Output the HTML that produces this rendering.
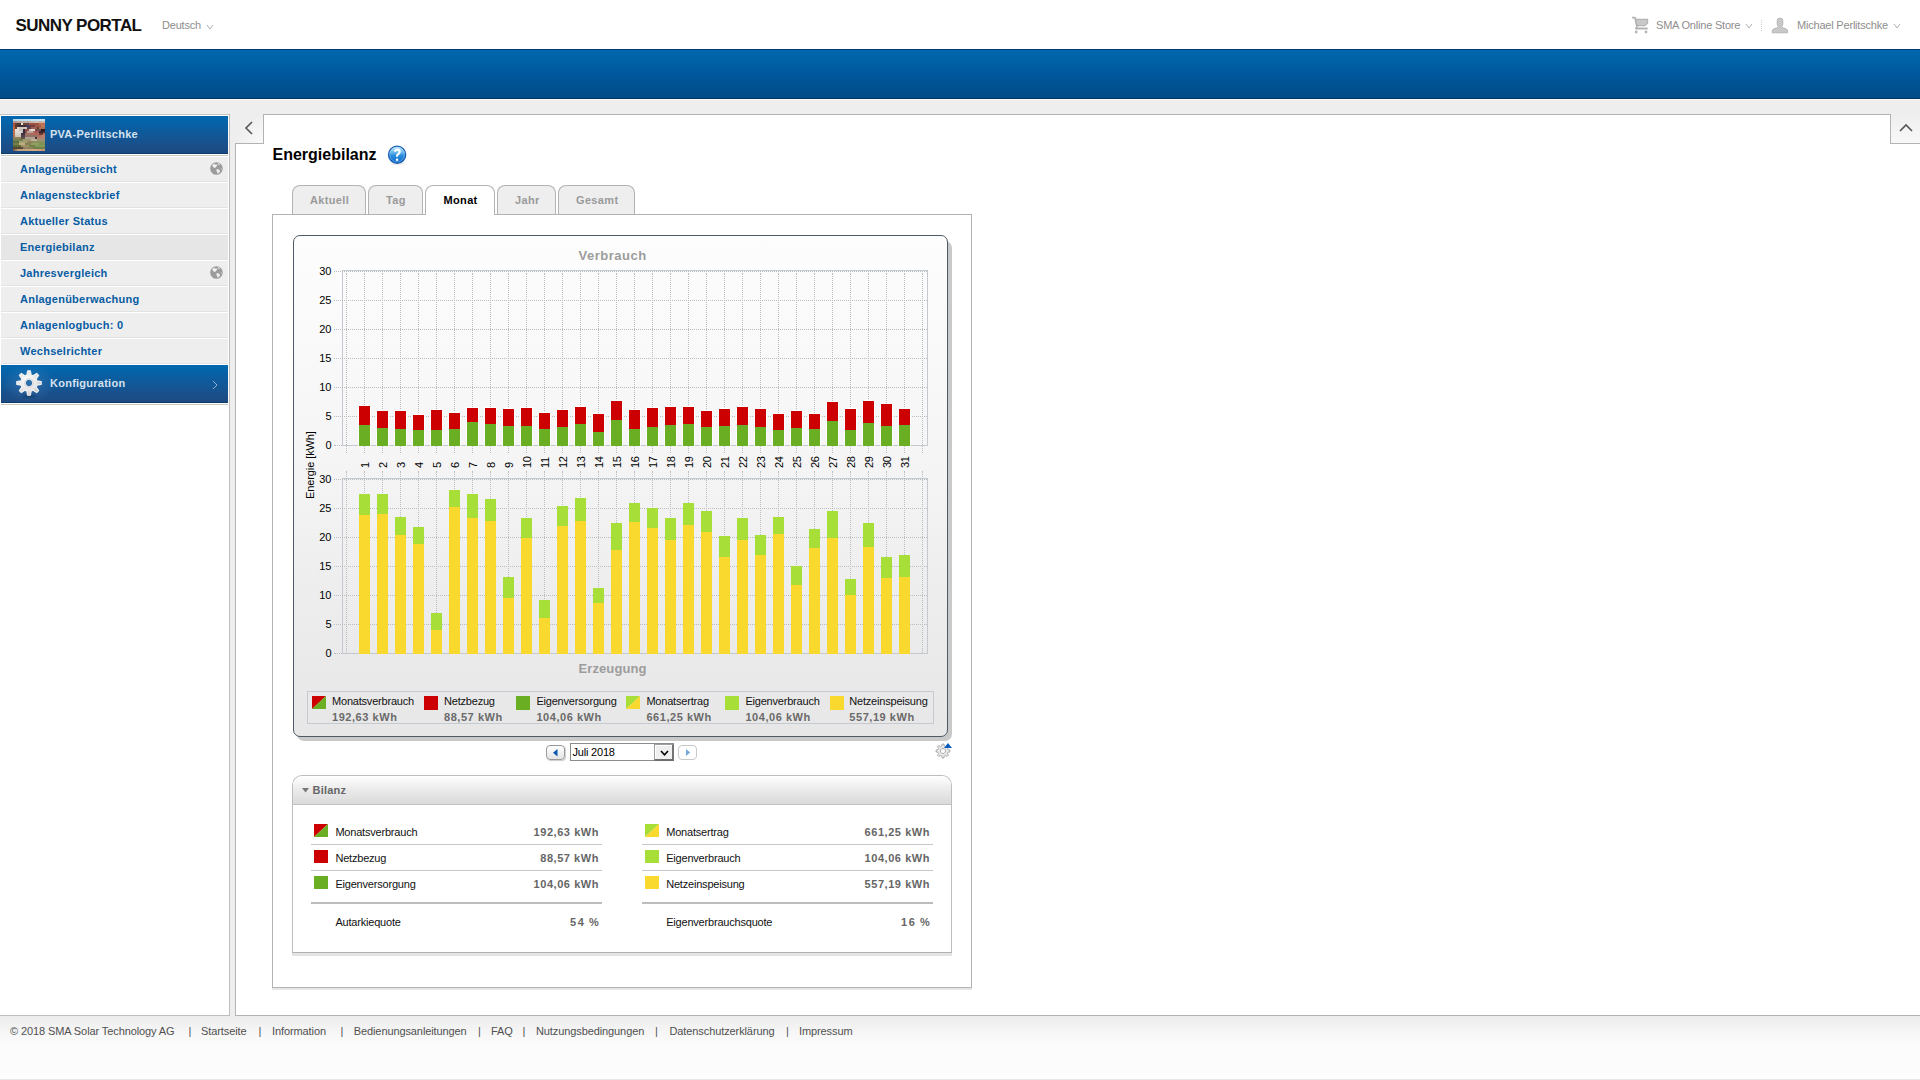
<!DOCTYPE html>
<html><head><meta charset="utf-8"><title>Sunny Portal - Energiebilanz</title>
<style>
html,body{margin:0;padding:0;width:1920px;height:1080px;overflow:hidden;background:#fff;}
body{position:relative;font-family:"Liberation Sans",sans-serif;}
.b{position:absolute;box-sizing:content-box;}
.t{position:absolute;white-space:nowrap;font-family:"Liberation Sans",sans-serif;}
</style></head><body>
<div class="t" style="left:15.5px;top:16.61px;font-size:17px;line-height:17px;font-weight:bold;color:#111;letter-spacing:-0.55px;">SUNNY PORTAL</div>
<div class="t" style="left:162px;top:19.69px;font-size:11px;line-height:11px;font-weight:normal;color:#8e8e8e;letter-spacing:-0.2px;">Deutsch</div>
<svg class="b" style="left:205.5px;top:23.5px" width="8" height="6"><polyline points="1,1 4.0,5 7,1" fill="none" stroke="#b0b0b0" stroke-width="1"/></svg>
<svg class="b" style="left:1628px;top:12px" width="24" height="26" viewBox="0 0 24 26">
<path d="M4 5.6 L7 5.6 L9 14.5 L8 17" fill="none" stroke="#b4b4b4" stroke-width="1.9" stroke-linejoin="round"/>
<path d="M7.6 7.3 L19.6 7.3 L19.6 11 L17 13.6 L9.2 13.6 Z" fill="#c8c8c8" stroke="#b4b4b4" stroke-width="1.2" stroke-linejoin="round"/>
<rect x="7.2" y="15.6" width="12.6" height="2" rx="0.8" fill="#b4b4b4"/>
<circle cx="8.2" cy="20" r="1.4" fill="#b4b4b4"/><circle cx="18" cy="20" r="1.4" fill="#b4b4b4"/>
</svg>
<div class="t" style="left:1656px;top:19.69px;font-size:11px;line-height:11px;font-weight:normal;color:#8e8e8e;letter-spacing:-0.2px;">SMA Online Store</div>
<svg class="b" style="left:1744.5px;top:23px" width="8" height="6"><polyline points="1,1 4.0,5 7,1" fill="none" stroke="#b0b0b0" stroke-width="1"/></svg>
<div class="b" style="left:1761px;top:20px;width:1px;height:11px;border-left:1px dotted #ccc;width:0"></div>
<svg class="b" style="left:1766px;top:12px" width="30" height="26" viewBox="0 0 30 26">
<path d="M11.2 8.2 Q11.2 6.2 14 6.2 Q16.8 6.2 16.8 8.2 L16.8 11.8 Q16.8 13.6 15.4 14.9 Q16.8 16 19.4 16.6 Q21.6 17.3 21.6 19 L21.6 20.8 L6.2 20.8 L6.2 19 Q6.2 17.3 8.4 16.6 Q11 16 12.6 14.9 Q11.2 13.6 11.2 11.8 Z" fill="#c8c8c8" stroke="#b2b2b2" stroke-width="0.9" stroke-linejoin="round"/>
</svg>
<div class="t" style="left:1797px;top:19.69px;font-size:11px;line-height:11px;font-weight:normal;color:#8e8e8e;letter-spacing:-0.2px;">Michael Perlitschke</div>
<svg class="b" style="left:1893px;top:23px" width="8" height="6"><polyline points="1,1 4.0,5 7,1" fill="none" stroke="#b0b0b0" stroke-width="1"/></svg>
<div class="b" style="left:0px;top:49px;width:1920px;height:48px;background:linear-gradient(#0067ae,#0062a6 20%,#00569a 55%,#004c86);border-top:1px solid #003a70;border-bottom:1px solid #003566;height:48px"></div>
<div class="b" style="left:0px;top:99px;width:1920px;height:917px;background:#eeeeee"></div>
<div class="b" style="left:0px;top:99px;width:1920px;height:1px;background:#faf8f5"></div>
<div class="b" style="left:0px;top:114px;width:229px;height:901px;background:#fff;border-top:1px solid #c4c4c4;border-right:1px solid #bdbdbd;border-bottom:1px solid #bdbdbd;width:229px;height:900px"></div>
<div class="b" style="left:1px;top:116px;width:227px;height:38px;background:linear-gradient(#0068b0,#1a4f8a 80%,#1d4a80);border-bottom:1px solid #0d3a6c;height:37px"></div>
<svg class="b" style="left:13px;top:119px" width="32" height="32" viewBox="0 0 32 32" shape-rendering="crispEdges"><rect x="0" y="0" width="2" height="2" fill="#b4d8f0"/><rect x="2" y="0" width="2" height="2" fill="#b4d8f0"/><rect x="4" y="0" width="2" height="2" fill="#b8dcf2"/><rect x="6" y="0" width="2" height="2" fill="#b8dcf2"/><rect x="8" y="0" width="2" height="2" fill="#bcdef4"/><rect x="10" y="0" width="2" height="2" fill="#bcdef4"/><rect x="12" y="0" width="2" height="2" fill="#c0e0f4"/><rect x="14" y="0" width="2" height="2" fill="#c0e0f4"/><rect x="16" y="0" width="2" height="2" fill="#c0e0f4"/><rect x="18" y="0" width="2" height="2" fill="#c0e0f4"/><rect x="20" y="0" width="2" height="2" fill="#c4e2f4"/><rect x="22" y="0" width="2" height="2" fill="#c4e2f4"/><rect x="24" y="0" width="2" height="2" fill="#c4e2f4"/><rect x="26" y="0" width="2" height="2" fill="#c8e4f4"/><rect x="28" y="0" width="2" height="2" fill="#c8e4f4"/><rect x="30" y="0" width="2" height="2" fill="#c8e4f4"/><rect x="0" y="2" width="2" height="2" fill="#c09080"/><rect x="2" y="2" width="2" height="2" fill="#b09888"/><rect x="4" y="2" width="2" height="2" fill="#c0a898"/><rect x="6" y="2" width="2" height="2" fill="#b8a090"/><rect x="8" y="2" width="2" height="2" fill="#c8b0a0"/><rect x="10" y="2" width="2" height="2" fill="#c0a8a0"/><rect x="12" y="2" width="2" height="2" fill="#c0b0a8"/><rect x="14" y="2" width="2" height="2" fill="#b8a8a0"/><rect x="16" y="2" width="2" height="2" fill="#c0b0a8"/><rect x="18" y="2" width="2" height="2" fill="#c8b8a8"/><rect x="20" y="2" width="2" height="2" fill="#c8b8b0"/><rect x="22" y="2" width="2" height="2" fill="#d0c0b0"/><rect x="24" y="2" width="2" height="2" fill="#d0c0b0"/><rect x="26" y="2" width="2" height="2" fill="#c8b0a0"/><rect x="28" y="2" width="2" height="2" fill="#d0b8a8"/><rect x="30" y="2" width="2" height="2" fill="#d0b8a8"/><rect x="0" y="4" width="2" height="2" fill="#b05038"/><rect x="2" y="4" width="2" height="2" fill="#604038"/><rect x="4" y="4" width="2" height="2" fill="#503830"/><rect x="6" y="4" width="2" height="2" fill="#503830"/><rect x="8" y="4" width="2" height="2" fill="#e0e0e0"/><rect x="10" y="4" width="2" height="2" fill="#704838"/><rect x="12" y="4" width="2" height="2" fill="#704838"/><rect x="14" y="4" width="2" height="2" fill="#704838"/><rect x="16" y="4" width="2" height="2" fill="#a05040"/><rect x="18" y="4" width="2" height="2" fill="#a05040"/><rect x="20" y="4" width="2" height="2" fill="#a05040"/><rect x="22" y="4" width="2" height="2" fill="#a05040"/><rect x="24" y="4" width="2" height="2" fill="#a05040"/><rect x="26" y="4" width="2" height="2" fill="#c07050"/><rect x="28" y="4" width="2" height="2" fill="#c07050"/><rect x="30" y="4" width="2" height="2" fill="#c07050"/><rect x="0" y="6" width="2" height="2" fill="#b05838"/><rect x="2" y="6" width="2" height="2" fill="#603828"/><rect x="4" y="6" width="2" height="2" fill="#403038"/><rect x="6" y="6" width="2" height="2" fill="#403038"/><rect x="8" y="6" width="2" height="2" fill="#403038"/><rect x="10" y="6" width="2" height="2" fill="#403038"/><rect x="12" y="6" width="2" height="2" fill="#503040"/><rect x="14" y="6" width="2" height="2" fill="#304080"/><rect x="16" y="6" width="2" height="2" fill="#704040"/><rect x="18" y="6" width="2" height="2" fill="#704040"/><rect x="20" y="6" width="2" height="2" fill="#704040"/><rect x="22" y="6" width="2" height="2" fill="#a05848"/><rect x="24" y="6" width="2" height="2" fill="#a05848"/><rect x="26" y="6" width="2" height="2" fill="#a05848"/><rect x="28" y="6" width="2" height="2" fill="#c07858"/><rect x="30" y="6" width="2" height="2" fill="#c07858"/><rect x="0" y="8" width="2" height="2" fill="#c06840"/><rect x="2" y="8" width="2" height="2" fill="#704030"/><rect x="4" y="8" width="2" height="2" fill="#e0d8d0"/><rect x="6" y="8" width="2" height="2" fill="#d0c8c0"/><rect x="8" y="8" width="2" height="2" fill="#d0c8c0"/><rect x="10" y="8" width="2" height="2" fill="#d0c8c0"/><rect x="12" y="8" width="2" height="2" fill="#d0c8c0"/><rect x="14" y="8" width="2" height="2" fill="#604048"/><rect x="16" y="8" width="2" height="2" fill="#604048"/><rect x="18" y="8" width="2" height="2" fill="#a06050"/><rect x="20" y="8" width="2" height="2" fill="#a06050"/><rect x="22" y="8" width="2" height="2" fill="#a06050"/><rect x="24" y="8" width="2" height="2" fill="#603838"/><rect x="26" y="8" width="2" height="2" fill="#b07050"/><rect x="28" y="8" width="2" height="2" fill="#b07050"/><rect x="30" y="8" width="2" height="2" fill="#b07050"/><rect x="0" y="10" width="2" height="2" fill="#c07048"/><rect x="2" y="10" width="2" height="2" fill="#e8e0d8"/><rect x="4" y="10" width="2" height="2" fill="#e8e0d8"/><rect x="6" y="10" width="2" height="2" fill="#c8c0b8"/><rect x="8" y="10" width="2" height="2" fill="#c8c0b8"/><rect x="10" y="10" width="2" height="2" fill="#302838"/><rect x="12" y="10" width="2" height="2" fill="#905048"/><rect x="14" y="10" width="2" height="2" fill="#905048"/><rect x="16" y="10" width="2" height="2" fill="#d8c8c0"/><rect x="18" y="10" width="2" height="2" fill="#e8e0d8"/><rect x="20" y="10" width="2" height="2" fill="#e0d8d0"/><rect x="22" y="10" width="2" height="2" fill="#804040"/><rect x="24" y="10" width="2" height="2" fill="#705050"/><rect x="26" y="10" width="2" height="2" fill="#705050"/><rect x="28" y="10" width="2" height="2" fill="#301820"/><rect x="30" y="10" width="2" height="2" fill="#301820"/><rect x="0" y="12" width="2" height="2" fill="#c87848"/><rect x="2" y="12" width="2" height="2" fill="#e0d8d0"/><rect x="4" y="12" width="2" height="2" fill="#e0d8d0"/><rect x="6" y="12" width="2" height="2" fill="#e0d8d0"/><rect x="8" y="12" width="2" height="2" fill="#d0c8c8"/><rect x="10" y="12" width="2" height="2" fill="#302838"/><rect x="12" y="12" width="2" height="2" fill="#805048"/><rect x="14" y="12" width="2" height="2" fill="#c0a098"/><rect x="16" y="12" width="2" height="2" fill="#c0a098"/><rect x="18" y="12" width="2" height="2" fill="#c0a098"/><rect x="20" y="12" width="2" height="2" fill="#b07060"/><rect x="22" y="12" width="2" height="2" fill="#a05858"/><rect x="24" y="12" width="2" height="2" fill="#a05858"/><rect x="26" y="12" width="2" height="2" fill="#402828"/><rect x="28" y="12" width="2" height="2" fill="#402828"/><rect x="30" y="12" width="2" height="2" fill="#503030"/><rect x="0" y="14" width="2" height="2" fill="#c07048"/><rect x="2" y="14" width="2" height="2" fill="#d8d0c8"/><rect x="4" y="14" width="2" height="2" fill="#d8d0c8"/><rect x="6" y="14" width="2" height="2" fill="#d8d0c8"/><rect x="8" y="14" width="2" height="2" fill="#403040"/><rect x="10" y="14" width="2" height="2" fill="#403040"/><rect x="12" y="14" width="2" height="2" fill="#a07060"/><rect x="14" y="14" width="2" height="2" fill="#a07060"/><rect x="16" y="14" width="2" height="2" fill="#a07060"/><rect x="18" y="14" width="2" height="2" fill="#b06858"/><rect x="20" y="14" width="2" height="2" fill="#b06858"/><rect x="22" y="14" width="2" height="2" fill="#b06858"/><rect x="24" y="14" width="2" height="2" fill="#b06858"/><rect x="26" y="14" width="2" height="2" fill="#703838"/><rect x="28" y="14" width="2" height="2" fill="#703838"/><rect x="30" y="14" width="2" height="2" fill="#b07060"/><rect x="0" y="16" width="2" height="2" fill="#b07050"/><rect x="2" y="16" width="2" height="2" fill="#d0c8b8"/><rect x="4" y="16" width="2" height="2" fill="#d0c8b8"/><rect x="6" y="16" width="2" height="2" fill="#d0c8b8"/><rect x="8" y="16" width="2" height="2" fill="#504050"/><rect x="10" y="16" width="2" height="2" fill="#504050"/><rect x="12" y="16" width="2" height="2" fill="#907068"/><rect x="14" y="16" width="2" height="2" fill="#907068"/><rect x="16" y="16" width="2" height="2" fill="#907068"/><rect x="18" y="16" width="2" height="2" fill="#907068"/><rect x="20" y="16" width="2" height="2" fill="#907068"/><rect x="22" y="16" width="2" height="2" fill="#907068"/><rect x="24" y="16" width="2" height="2" fill="#b07060"/><rect x="26" y="16" width="2" height="2" fill="#b07060"/><rect x="28" y="16" width="2" height="2" fill="#c08068"/><rect x="30" y="16" width="2" height="2" fill="#c08070"/><rect x="0" y="18" width="2" height="2" fill="#908058"/><rect x="2" y="18" width="2" height="2" fill="#908058"/><rect x="4" y="18" width="2" height="2" fill="#908058"/><rect x="6" y="18" width="2" height="2" fill="#908058"/><rect x="8" y="18" width="2" height="2" fill="#605040"/><rect x="10" y="18" width="2" height="2" fill="#605040"/><rect x="12" y="18" width="2" height="2" fill="#b0a090"/><rect x="14" y="18" width="2" height="2" fill="#b0a090"/><rect x="16" y="18" width="2" height="2" fill="#b0a090"/><rect x="18" y="18" width="2" height="2" fill="#b0a090"/><rect x="20" y="18" width="2" height="2" fill="#b0a090"/><rect x="22" y="18" width="2" height="2" fill="#403030"/><rect x="24" y="18" width="2" height="2" fill="#b08070"/><rect x="26" y="18" width="2" height="2" fill="#b08070"/><rect x="28" y="18" width="2" height="2" fill="#b08070"/><rect x="30" y="18" width="2" height="2" fill="#b08070"/><rect x="0" y="20" width="2" height="2" fill="#708050"/><rect x="2" y="20" width="2" height="2" fill="#708050"/><rect x="4" y="20" width="2" height="2" fill="#708050"/><rect x="6" y="20" width="2" height="2" fill="#708050"/><rect x="8" y="20" width="2" height="2" fill="#708050"/><rect x="10" y="20" width="2" height="2" fill="#a09870"/><rect x="12" y="20" width="2" height="2" fill="#a09870"/><rect x="14" y="20" width="2" height="2" fill="#a09870"/><rect x="16" y="20" width="2" height="2" fill="#a09870"/><rect x="18" y="20" width="2" height="2" fill="#c0b098"/><rect x="20" y="20" width="2" height="2" fill="#c0b098"/><rect x="22" y="20" width="2" height="2" fill="#c0b098"/><rect x="24" y="20" width="2" height="2" fill="#a09070"/><rect x="26" y="20" width="2" height="2" fill="#a09070"/><rect x="28" y="20" width="2" height="2" fill="#a09070"/><rect x="30" y="20" width="2" height="2" fill="#a09070"/><rect x="0" y="22" width="2" height="2" fill="#607040"/><rect x="2" y="22" width="2" height="2" fill="#607040"/><rect x="4" y="22" width="2" height="2" fill="#607040"/><rect x="6" y="22" width="2" height="2" fill="#a0a070"/><rect x="8" y="22" width="2" height="2" fill="#a0a070"/><rect x="10" y="22" width="2" height="2" fill="#a0a070"/><rect x="12" y="22" width="2" height="2" fill="#a0a070"/><rect x="14" y="22" width="2" height="2" fill="#908060"/><rect x="16" y="22" width="2" height="2" fill="#908060"/><rect x="18" y="22" width="2" height="2" fill="#908060"/><rect x="20" y="22" width="2" height="2" fill="#8a9060"/><rect x="22" y="22" width="2" height="2" fill="#8a9060"/><rect x="24" y="22" width="2" height="2" fill="#8a9060"/><rect x="26" y="22" width="2" height="2" fill="#8a9060"/><rect x="28" y="22" width="2" height="2" fill="#8a9060"/><rect x="30" y="22" width="2" height="2" fill="#8a9060"/><rect x="0" y="24" width="2" height="2" fill="#708048"/><rect x="2" y="24" width="2" height="2" fill="#708048"/><rect x="4" y="24" width="2" height="2" fill="#708048"/><rect x="6" y="24" width="2" height="2" fill="#c0b080"/><rect x="8" y="24" width="2" height="2" fill="#c0b080"/><rect x="10" y="24" width="2" height="2" fill="#c0b080"/><rect x="12" y="24" width="2" height="2" fill="#808050"/><rect x="14" y="24" width="2" height="2" fill="#808050"/><rect x="16" y="24" width="2" height="2" fill="#808050"/><rect x="18" y="24" width="2" height="2" fill="#90a060"/><rect x="20" y="24" width="2" height="2" fill="#90a060"/><rect x="22" y="24" width="2" height="2" fill="#90a060"/><rect x="24" y="24" width="2" height="2" fill="#90a060"/><rect x="26" y="24" width="2" height="2" fill="#809050"/><rect x="28" y="24" width="2" height="2" fill="#809050"/><rect x="30" y="24" width="2" height="2" fill="#809050"/><rect x="0" y="26" width="2" height="2" fill="#606838"/><rect x="2" y="26" width="2" height="2" fill="#606838"/><rect x="4" y="26" width="2" height="2" fill="#606838"/><rect x="6" y="26" width="2" height="2" fill="#606838"/><rect x="8" y="26" width="2" height="2" fill="#a09068"/><rect x="10" y="26" width="2" height="2" fill="#a09068"/><rect x="12" y="26" width="2" height="2" fill="#a09068"/><rect x="14" y="26" width="2" height="2" fill="#a09068"/><rect x="16" y="26" width="2" height="2" fill="#708048"/><rect x="18" y="26" width="2" height="2" fill="#708048"/><rect x="20" y="26" width="2" height="2" fill="#708048"/><rect x="22" y="26" width="2" height="2" fill="#809858"/><rect x="24" y="26" width="2" height="2" fill="#809858"/><rect x="26" y="26" width="2" height="2" fill="#809858"/><rect x="28" y="26" width="2" height="2" fill="#809858"/><rect x="30" y="26" width="2" height="2" fill="#809858"/><rect x="0" y="28" width="2" height="2" fill="#504830"/><rect x="2" y="28" width="2" height="2" fill="#504830"/><rect x="4" y="28" width="2" height="2" fill="#504830"/><rect x="6" y="28" width="2" height="2" fill="#504830"/><rect x="8" y="28" width="2" height="2" fill="#504830"/><rect x="10" y="28" width="2" height="2" fill="#908060"/><rect x="12" y="28" width="2" height="2" fill="#908060"/><rect x="14" y="28" width="2" height="2" fill="#908060"/><rect x="16" y="28" width="2" height="2" fill="#908060"/><rect x="18" y="28" width="2" height="2" fill="#908060"/><rect x="20" y="28" width="2" height="2" fill="#708048"/><rect x="22" y="28" width="2" height="2" fill="#708048"/><rect x="24" y="28" width="2" height="2" fill="#708048"/><rect x="26" y="28" width="2" height="2" fill="#708048"/><rect x="28" y="28" width="2" height="2" fill="#708048"/><rect x="30" y="28" width="2" height="2" fill="#708048"/><rect x="0" y="30" width="2" height="2" fill="#806050"/><rect x="2" y="30" width="2" height="2" fill="#a08060"/><rect x="4" y="30" width="2" height="2" fill="#c0a080"/><rect x="6" y="30" width="2" height="2" fill="#c0a080"/><rect x="8" y="30" width="2" height="2" fill="#c0a080"/><rect x="10" y="30" width="2" height="2" fill="#c0a080"/><rect x="12" y="30" width="2" height="2" fill="#c8a880"/><rect x="14" y="30" width="2" height="2" fill="#c8a880"/><rect x="16" y="30" width="2" height="2" fill="#c8a880"/><rect x="18" y="30" width="2" height="2" fill="#d0a880"/><rect x="20" y="30" width="2" height="2" fill="#d0a880"/><rect x="22" y="30" width="2" height="2" fill="#d0a880"/><rect x="24" y="30" width="2" height="2" fill="#d0a080"/><rect x="26" y="30" width="2" height="2" fill="#d0a080"/><rect x="28" y="30" width="2" height="2" fill="#c89870"/><rect x="30" y="30" width="2" height="2" fill="#c89870"/></svg>
<div class="t" style="left:50px;top:128.69px;font-size:11px;line-height:11px;font-weight:bold;color:#d6e2ef;letter-spacing:0.25px;">PVA-Perlitschke</div>
<div class="b" style="left:1px;top:155px;width:227px;height:1px;background:#c9c8c0"></div>
<div class="b" style="left:1px;top:157px;width:227px;height:24px;background:#eeeeee;border-bottom:1px solid #e2e2e2"></div>
<div class="t" style="left:20px;top:163.69px;font-size:11px;line-height:11px;font-weight:bold;color:#075ca4;letter-spacing:0.25px;">Anlagenübersicht</div>
<div class="b" style="left:1px;top:183px;width:227px;height:24px;background:#eeeeee;border-bottom:1px solid #e2e2e2"></div>
<div class="t" style="left:20px;top:189.69px;font-size:11px;line-height:11px;font-weight:bold;color:#075ca4;letter-spacing:0.25px;">Anlagensteckbrief</div>
<div class="b" style="left:1px;top:209px;width:227px;height:24px;background:#eeeeee;border-bottom:1px solid #e2e2e2"></div>
<div class="t" style="left:20px;top:215.69px;font-size:11px;line-height:11px;font-weight:bold;color:#075ca4;letter-spacing:0.25px;">Aktueller Status</div>
<div class="b" style="left:1px;top:235px;width:227px;height:24px;background:#e6e6e6;border-bottom:1px solid #e2e2e2"></div>
<div class="t" style="left:20px;top:241.69px;font-size:11px;line-height:11px;font-weight:bold;color:#075ca4;letter-spacing:0.25px;">Energiebilanz</div>
<div class="b" style="left:1px;top:261px;width:227px;height:24px;background:#eeeeee;border-bottom:1px solid #e2e2e2"></div>
<div class="t" style="left:20px;top:267.69px;font-size:11px;line-height:11px;font-weight:bold;color:#075ca4;letter-spacing:0.25px;">Jahresvergleich</div>
<div class="b" style="left:1px;top:287px;width:227px;height:24px;background:#eeeeee;border-bottom:1px solid #e2e2e2"></div>
<div class="t" style="left:20px;top:293.69px;font-size:11px;line-height:11px;font-weight:bold;color:#075ca4;letter-spacing:0.25px;">Anlagenüberwachung</div>
<div class="b" style="left:1px;top:313px;width:227px;height:24px;background:#eeeeee;border-bottom:1px solid #e2e2e2"></div>
<div class="t" style="left:20px;top:319.69px;font-size:11px;line-height:11px;font-weight:bold;color:#075ca4;letter-spacing:0.25px;">Anlagenlogbuch: 0</div>
<div class="b" style="left:1px;top:339px;width:227px;height:24px;background:#eeeeee;border-bottom:1px solid #e2e2e2"></div>
<div class="t" style="left:20px;top:345.69px;font-size:11px;line-height:11px;font-weight:bold;color:#075ca4;letter-spacing:0.25px;">Wechselrichter</div>
<svg class="b" style="left:210px;top:162px" width="13" height="13" viewBox="0 0 13 13">
<circle cx="6.45" cy="6.45" r="6.3" fill="#9c9c9c"/>
<path d="M2.1 3.4 Q2.9 1.9 4.5 1.8 L5.7 2.7 L7.5 2.5 L7.3 3.5 L5.5 5.5 L4.6 6.2 L3.3 4.9 Z" fill="#eeeeee"/>
<path d="M7.9 1.1 L9.1 1.4 L10.1 2.6 L8.6 2.9 Z" fill="#eeeeee"/>
<path d="M6.8 7.1 L7.9 6.9 L9.3 8 L10.2 9 L9.3 10.6 L7.7 11.8 L7.2 10.4 L6.4 8.4 Z" fill="#eeeeee"/>
<path d="M11.1 6 L12.1 6.2 L12.1 7.4 L11.2 7.3 Z" fill="#c8c8c8"/>
</svg>
<svg class="b" style="left:210px;top:266px" width="13" height="13" viewBox="0 0 13 13">
<circle cx="6.45" cy="6.45" r="6.3" fill="#9c9c9c"/>
<path d="M2.1 3.4 Q2.9 1.9 4.5 1.8 L5.7 2.7 L7.5 2.5 L7.3 3.5 L5.5 5.5 L4.6 6.2 L3.3 4.9 Z" fill="#eeeeee"/>
<path d="M7.9 1.1 L9.1 1.4 L10.1 2.6 L8.6 2.9 Z" fill="#eeeeee"/>
<path d="M6.8 7.1 L7.9 6.9 L9.3 8 L10.2 9 L9.3 10.6 L7.7 11.8 L7.2 10.4 L6.4 8.4 Z" fill="#eeeeee"/>
<path d="M11.1 6 L12.1 6.2 L12.1 7.4 L11.2 7.3 Z" fill="#c8c8c8"/>
</svg>
<div class="b" style="left:1px;top:365px;width:227px;height:38px;background:linear-gradient(#0068b0,#1a4f8a 80%,#1d4a80);border-bottom:1px solid #0d3a6c;height:37px"></div>
<div class="b" style="left:1px;top:404px;width:227px;height:1px;background:#c9c8c0"></div>
<div class="b" style="left:4px;top:366px;width:52px;height:36px;background:radial-gradient(ellipse 26px 20px at 25px 17px,rgba(120,170,220,0.28),rgba(120,170,220,0) 100%)"></div>
<svg class="b" style="left:15px;top:369px" width="28" height="30" viewBox="0 0 28 30">
<defs><radialGradient id="gg" cx="0.42" cy="0.4" r="0.6"><stop offset="0" stop-color="#ffffff"/><stop offset="0.7" stop-color="#e4e4e6"/><stop offset="1" stop-color="#c8c8cc"/></radialGradient>
<filter id="gsh" x="-0.5" y="-2" width="2" height="5"><feGaussianBlur stdDeviation="1"/></filter></defs>
<ellipse cx="14" cy="27.3" rx="7" ry="1.3" fill="#0a2a55" opacity="0.6" filter="url(#gsh)"/>
<path d="M11.81 6.10 L12.65 1.77 L15.35 1.77 L16.19 6.10 L18.04 6.87 L21.69 4.40 L23.60 6.31 L21.13 9.96 L21.90 11.81 L26.23 12.65 L26.23 15.35 L21.90 16.19 L21.13 18.04 L23.60 21.69 L21.69 23.60 L18.04 21.13 L16.19 21.90 L15.35 26.23 L12.65 26.23 L11.81 21.90 L9.96 21.13 L6.31 23.60 L4.40 21.69 L6.87 18.04 L6.10 16.19 L1.77 15.35 L1.77 12.65 L6.10 11.81 L6.87 9.96 L4.40 6.31 L6.31 4.40 L9.96 6.87 Z M14 10.2 A3.8 3.8 0 1 0 14.01 10.2 Z" fill="url(#gg)" stroke="#f0f0f0" stroke-width="1.2" stroke-linejoin="round" fill-rule="evenodd"/>
<circle cx="14" cy="14" r="4.2" fill="none" stroke="#c8c8cc" stroke-width="0.8"/>
</svg>
<div class="t" style="left:50px;top:377.69px;font-size:11px;line-height:11px;font-weight:bold;color:#d6e2ef;letter-spacing:0.25px;">Konfiguration</div>
<svg class="b" style="left:212px;top:380px" width="7" height="10"><polyline points="1,1 5,5 1,9" fill="none" stroke="#8fb0d6" stroke-width="1"/></svg>
<div class="b" style="left:235px;top:114px;width:28px;height:29px;background:radial-gradient(circle at 100% 100%,#fafafa,#eeeeee 70%)"></div>
<svg class="b" style="left:244px;top:121px" width="10" height="14"><polyline points="8,1 2,7 8,13" fill="none" stroke="#555" stroke-width="1.6"/></svg>
<div class="b" style="left:1891px;top:114px;width:29px;height:29px;background:linear-gradient(#eeeeee,#f8f8f8)"></div>
<svg class="b" style="left:1899px;top:123px" width="14" height="10"><polyline points="1,8 7,2 13,8" fill="none" stroke="#555" stroke-width="1.6"/></svg>
<div class="b" style="left:263px;top:114px;width:1626px;height:29px;background:#fff;border-top:1px solid #b3b3b3;border-left:1px solid #b3b3b3;border-right:1px solid #b3b3b3;height:29px"></div>
<div class="b" style="left:235px;top:143px;width:1685px;height:872px;background:#fff;border-top:1px solid #b3b3b3;border-left:1px solid #b3b3b3;border-bottom:1px solid #b3b3b3;width:1684px;height:871px"></div>
<div class="b" style="left:264px;top:143px;width:1626px;height:1px;background:#fff"></div>
<div class="t" style="left:272.5px;top:147.46px;font-size:16px;line-height:16px;font-weight:bold;color:#000;letter-spacing:0px;">Energiebilanz</div>
<svg class="b" style="left:387px;top:145px" width="21" height="21" viewBox="0 0 21 21">
<defs><linearGradient id="hg" x1="0" y1="0" x2="0" y2="1"><stop offset="0" stop-color="#d2f4ff"/><stop offset="0.3" stop-color="#7cc4f0"/><stop offset="0.55" stop-color="#2d8ee0"/><stop offset="1" stop-color="#0a66c4"/></linearGradient>
<radialGradient id="hg2" cx="0.5" cy="0.25" r="0.5"><stop offset="0" stop-color="#fff" stop-opacity="0.35"/><stop offset="1" stop-color="#fff" stop-opacity="0"/></radialGradient></defs>
<ellipse cx="10.1" cy="18.6" rx="7" ry="1.6" fill="#000" opacity="0.08"/>
<circle cx="10.1" cy="9.7" r="8.6" fill="url(#hg)" stroke="#1b5db4" stroke-width="1.3"/>
<circle cx="10.1" cy="9.7" r="7.3" fill="none" stroke="#9ad2f4" stroke-width="0.7" opacity="0.6"/>
<path d="M7.8 6.6 Q8.4 4.6 10.3 4.6 Q12.7 4.7 12.7 6.9 Q12.6 8.4 11 9.2 Q10 9.8 10 11.7" fill="none" stroke="#fff" stroke-width="2.1" stroke-linecap="butt"/>
<rect x="8.9" y="13.6" width="2.3" height="2.2" fill="#fff"/>
</svg>
<div class="b" style="left:272px;top:214px;width:699px;height:774px;background:#fff;border:1px solid #b3b3b3;width:698px;height:772px;box-shadow:0 2px 0 #e6e6e6"></div>
<div class="b" style="left:292px;top:185px;width:72px;height:28px;background:#eeeeee;border:1px solid #b3b3b3;border-bottom:none;border-radius:8px 8px 0 0"></div>
<div class="t" style="left:310px;top:194.69px;font-size:11px;line-height:11px;font-weight:bold;color:#9a9a9a;letter-spacing:0.35px;">Aktuell</div>
<div class="b" style="left:368px;top:185px;width:53px;height:28px;background:#eeeeee;border:1px solid #b3b3b3;border-bottom:none;border-radius:8px 8px 0 0"></div>
<div class="t" style="left:386px;top:194.69px;font-size:11px;line-height:11px;font-weight:bold;color:#9a9a9a;letter-spacing:0.35px;">Tag</div>
<div class="b" style="left:425px;top:185px;width:68px;height:29px;background:#fff;border:1px solid #b3b3b3;border-bottom:none;border-radius:8px 8px 0 0"></div>
<div class="t" style="left:443.5px;top:194.69px;font-size:11px;line-height:11px;font-weight:bold;color:#000;letter-spacing:0.35px;">Monat</div>
<div class="b" style="left:497px;top:185px;width:57px;height:28px;background:#eeeeee;border:1px solid #b3b3b3;border-bottom:none;border-radius:8px 8px 0 0"></div>
<div class="t" style="left:515px;top:194.69px;font-size:11px;line-height:11px;font-weight:bold;color:#9a9a9a;letter-spacing:0.35px;">Jahr</div>
<div class="b" style="left:558px;top:185px;width:75px;height:28px;background:#eeeeee;border:1px solid #b3b3b3;border-bottom:none;border-radius:8px 8px 0 0"></div>
<div class="t" style="left:576px;top:194.69px;font-size:11px;line-height:11px;font-weight:bold;color:#9a9a9a;letter-spacing:0.35px;">Gesamt</div>
<div class="b" style="left:297px;top:241px;width:655px;height:500px;background:#c9c9c9;border-radius:7px"></div>
<div class="b" style="left:293px;top:235px;width:655px;height:502px;background:linear-gradient(#fdfdfd,#f5f5f5 45%,#ebebeb 80%,#e7e7e7);border:1px solid #4e5a66;border-radius:7px;width:653px;height:500px"></div>
<div class="t" style="left:578.5px;top:249.00px;font-size:13px;line-height:13px;font-weight:bold;color:#9c9c9c;letter-spacing:0.5px;">Verbrauch</div>
<div class="t" style="left:578.5px;top:662.00px;font-size:13px;line-height:13px;font-weight:bold;color:#9c9c9c;letter-spacing:0.1px;">Erzeugung</div>
<div class="b" style="left:342px;top:270px;width:586px;height:176px;border:1px solid #c3c9cf;width:584px;height:174px"></div>
<div class="b" style="left:334px;top:271px;width:593px;height:1px;border-top:1px dotted #b9bdc2;height:0"></div>
<div class="t" style="right:1588.5px;top:265.69px;font-size:11px;line-height:11px;font-weight:normal;color:#000;letter-spacing:0px;">30</div>
<div class="b" style="left:334px;top:300px;width:593px;height:1px;border-top:1px dotted #b9bdc2;height:0"></div>
<div class="t" style="right:1588.5px;top:294.69px;font-size:11px;line-height:11px;font-weight:normal;color:#000;letter-spacing:0px;">25</div>
<div class="b" style="left:334px;top:329px;width:593px;height:1px;border-top:1px dotted #b9bdc2;height:0"></div>
<div class="t" style="right:1588.5px;top:323.69px;font-size:11px;line-height:11px;font-weight:normal;color:#000;letter-spacing:0px;">20</div>
<div class="b" style="left:334px;top:358px;width:593px;height:1px;border-top:1px dotted #b9bdc2;height:0"></div>
<div class="t" style="right:1588.5px;top:352.69px;font-size:11px;line-height:11px;font-weight:normal;color:#000;letter-spacing:0px;">15</div>
<div class="b" style="left:334px;top:387px;width:593px;height:1px;border-top:1px dotted #b9bdc2;height:0"></div>
<div class="t" style="right:1588.5px;top:381.69px;font-size:11px;line-height:11px;font-weight:normal;color:#000;letter-spacing:0px;">10</div>
<div class="b" style="left:334px;top:416px;width:593px;height:1px;border-top:1px dotted #b9bdc2;height:0"></div>
<div class="t" style="right:1588.5px;top:410.69px;font-size:11px;line-height:11px;font-weight:normal;color:#000;letter-spacing:0px;">5</div>
<div class="b" style="left:334px;top:445px;width:8px;height:1px;border-top:1px dotted #b9bdc2;height:0"></div>
<div class="t" style="right:1588.5px;top:439.69px;font-size:11px;line-height:11px;font-weight:normal;color:#000;letter-spacing:0px;">0</div>
<div class="b" style="left:342px;top:478px;width:586px;height:176px;border:1px solid #c3c9cf;width:584px;height:174px"></div>
<div class="b" style="left:334px;top:479px;width:593px;height:1px;border-top:1px dotted #b9bdc2;height:0"></div>
<div class="t" style="right:1588.5px;top:473.69px;font-size:11px;line-height:11px;font-weight:normal;color:#000;letter-spacing:0px;">30</div>
<div class="b" style="left:334px;top:508px;width:593px;height:1px;border-top:1px dotted #b9bdc2;height:0"></div>
<div class="t" style="right:1588.5px;top:502.69px;font-size:11px;line-height:11px;font-weight:normal;color:#000;letter-spacing:0px;">25</div>
<div class="b" style="left:334px;top:537px;width:593px;height:1px;border-top:1px dotted #b9bdc2;height:0"></div>
<div class="t" style="right:1588.5px;top:531.69px;font-size:11px;line-height:11px;font-weight:normal;color:#000;letter-spacing:0px;">20</div>
<div class="b" style="left:334px;top:566px;width:593px;height:1px;border-top:1px dotted #b9bdc2;height:0"></div>
<div class="t" style="right:1588.5px;top:560.69px;font-size:11px;line-height:11px;font-weight:normal;color:#000;letter-spacing:0px;">15</div>
<div class="b" style="left:334px;top:595px;width:593px;height:1px;border-top:1px dotted #b9bdc2;height:0"></div>
<div class="t" style="right:1588.5px;top:589.69px;font-size:11px;line-height:11px;font-weight:normal;color:#000;letter-spacing:0px;">10</div>
<div class="b" style="left:334px;top:624px;width:593px;height:1px;border-top:1px dotted #b9bdc2;height:0"></div>
<div class="t" style="right:1588.5px;top:618.69px;font-size:11px;line-height:11px;font-weight:normal;color:#000;letter-spacing:0px;">5</div>
<div class="b" style="left:334px;top:653px;width:8px;height:1px;border-top:1px dotted #b9bdc2;height:0"></div>
<div class="t" style="right:1588.5px;top:647.69px;font-size:11px;line-height:11px;font-weight:normal;color:#000;letter-spacing:0px;">0</div>
<div class="b" style="left:346px;top:273px;width:1px;height:180px;border-left:1px dotted #b9bdc2;width:0"></div>
<div class="b" style="left:346px;top:471px;width:1px;height:182px;border-left:1px dotted #b9bdc2;width:0"></div>
<div class="b" style="left:364px;top:273px;width:1px;height:180px;border-left:1px dotted #b9bdc2;width:0"></div>
<div class="b" style="left:364px;top:471px;width:1px;height:182px;border-left:1px dotted #b9bdc2;width:0"></div>
<div class="b" style="left:382px;top:273px;width:1px;height:180px;border-left:1px dotted #b9bdc2;width:0"></div>
<div class="b" style="left:382px;top:471px;width:1px;height:182px;border-left:1px dotted #b9bdc2;width:0"></div>
<div class="b" style="left:400px;top:273px;width:1px;height:180px;border-left:1px dotted #b9bdc2;width:0"></div>
<div class="b" style="left:400px;top:471px;width:1px;height:182px;border-left:1px dotted #b9bdc2;width:0"></div>
<div class="b" style="left:418px;top:273px;width:1px;height:180px;border-left:1px dotted #b9bdc2;width:0"></div>
<div class="b" style="left:418px;top:471px;width:1px;height:182px;border-left:1px dotted #b9bdc2;width:0"></div>
<div class="b" style="left:436px;top:273px;width:1px;height:180px;border-left:1px dotted #b9bdc2;width:0"></div>
<div class="b" style="left:436px;top:471px;width:1px;height:182px;border-left:1px dotted #b9bdc2;width:0"></div>
<div class="b" style="left:454px;top:273px;width:1px;height:180px;border-left:1px dotted #b9bdc2;width:0"></div>
<div class="b" style="left:454px;top:471px;width:1px;height:182px;border-left:1px dotted #b9bdc2;width:0"></div>
<div class="b" style="left:472px;top:273px;width:1px;height:180px;border-left:1px dotted #b9bdc2;width:0"></div>
<div class="b" style="left:472px;top:471px;width:1px;height:182px;border-left:1px dotted #b9bdc2;width:0"></div>
<div class="b" style="left:490px;top:273px;width:1px;height:180px;border-left:1px dotted #b9bdc2;width:0"></div>
<div class="b" style="left:490px;top:471px;width:1px;height:182px;border-left:1px dotted #b9bdc2;width:0"></div>
<div class="b" style="left:508px;top:273px;width:1px;height:180px;border-left:1px dotted #b9bdc2;width:0"></div>
<div class="b" style="left:508px;top:471px;width:1px;height:182px;border-left:1px dotted #b9bdc2;width:0"></div>
<div class="b" style="left:526px;top:273px;width:1px;height:180px;border-left:1px dotted #b9bdc2;width:0"></div>
<div class="b" style="left:526px;top:471px;width:1px;height:182px;border-left:1px dotted #b9bdc2;width:0"></div>
<div class="b" style="left:544px;top:273px;width:1px;height:180px;border-left:1px dotted #b9bdc2;width:0"></div>
<div class="b" style="left:544px;top:471px;width:1px;height:182px;border-left:1px dotted #b9bdc2;width:0"></div>
<div class="b" style="left:562px;top:273px;width:1px;height:180px;border-left:1px dotted #b9bdc2;width:0"></div>
<div class="b" style="left:562px;top:471px;width:1px;height:182px;border-left:1px dotted #b9bdc2;width:0"></div>
<div class="b" style="left:580px;top:273px;width:1px;height:180px;border-left:1px dotted #b9bdc2;width:0"></div>
<div class="b" style="left:580px;top:471px;width:1px;height:182px;border-left:1px dotted #b9bdc2;width:0"></div>
<div class="b" style="left:598px;top:273px;width:1px;height:180px;border-left:1px dotted #b9bdc2;width:0"></div>
<div class="b" style="left:598px;top:471px;width:1px;height:182px;border-left:1px dotted #b9bdc2;width:0"></div>
<div class="b" style="left:616px;top:273px;width:1px;height:180px;border-left:1px dotted #b9bdc2;width:0"></div>
<div class="b" style="left:616px;top:471px;width:1px;height:182px;border-left:1px dotted #b9bdc2;width:0"></div>
<div class="b" style="left:634px;top:273px;width:1px;height:180px;border-left:1px dotted #b9bdc2;width:0"></div>
<div class="b" style="left:634px;top:471px;width:1px;height:182px;border-left:1px dotted #b9bdc2;width:0"></div>
<div class="b" style="left:652px;top:273px;width:1px;height:180px;border-left:1px dotted #b9bdc2;width:0"></div>
<div class="b" style="left:652px;top:471px;width:1px;height:182px;border-left:1px dotted #b9bdc2;width:0"></div>
<div class="b" style="left:670px;top:273px;width:1px;height:180px;border-left:1px dotted #b9bdc2;width:0"></div>
<div class="b" style="left:670px;top:471px;width:1px;height:182px;border-left:1px dotted #b9bdc2;width:0"></div>
<div class="b" style="left:688px;top:273px;width:1px;height:180px;border-left:1px dotted #b9bdc2;width:0"></div>
<div class="b" style="left:688px;top:471px;width:1px;height:182px;border-left:1px dotted #b9bdc2;width:0"></div>
<div class="b" style="left:706px;top:273px;width:1px;height:180px;border-left:1px dotted #b9bdc2;width:0"></div>
<div class="b" style="left:706px;top:471px;width:1px;height:182px;border-left:1px dotted #b9bdc2;width:0"></div>
<div class="b" style="left:724px;top:273px;width:1px;height:180px;border-left:1px dotted #b9bdc2;width:0"></div>
<div class="b" style="left:724px;top:471px;width:1px;height:182px;border-left:1px dotted #b9bdc2;width:0"></div>
<div class="b" style="left:742px;top:273px;width:1px;height:180px;border-left:1px dotted #b9bdc2;width:0"></div>
<div class="b" style="left:742px;top:471px;width:1px;height:182px;border-left:1px dotted #b9bdc2;width:0"></div>
<div class="b" style="left:760px;top:273px;width:1px;height:180px;border-left:1px dotted #b9bdc2;width:0"></div>
<div class="b" style="left:760px;top:471px;width:1px;height:182px;border-left:1px dotted #b9bdc2;width:0"></div>
<div class="b" style="left:778px;top:273px;width:1px;height:180px;border-left:1px dotted #b9bdc2;width:0"></div>
<div class="b" style="left:778px;top:471px;width:1px;height:182px;border-left:1px dotted #b9bdc2;width:0"></div>
<div class="b" style="left:796px;top:273px;width:1px;height:180px;border-left:1px dotted #b9bdc2;width:0"></div>
<div class="b" style="left:796px;top:471px;width:1px;height:182px;border-left:1px dotted #b9bdc2;width:0"></div>
<div class="b" style="left:814px;top:273px;width:1px;height:180px;border-left:1px dotted #b9bdc2;width:0"></div>
<div class="b" style="left:814px;top:471px;width:1px;height:182px;border-left:1px dotted #b9bdc2;width:0"></div>
<div class="b" style="left:832px;top:273px;width:1px;height:180px;border-left:1px dotted #b9bdc2;width:0"></div>
<div class="b" style="left:832px;top:471px;width:1px;height:182px;border-left:1px dotted #b9bdc2;width:0"></div>
<div class="b" style="left:850px;top:273px;width:1px;height:180px;border-left:1px dotted #b9bdc2;width:0"></div>
<div class="b" style="left:850px;top:471px;width:1px;height:182px;border-left:1px dotted #b9bdc2;width:0"></div>
<div class="b" style="left:868px;top:273px;width:1px;height:180px;border-left:1px dotted #b9bdc2;width:0"></div>
<div class="b" style="left:868px;top:471px;width:1px;height:182px;border-left:1px dotted #b9bdc2;width:0"></div>
<div class="b" style="left:886px;top:273px;width:1px;height:180px;border-left:1px dotted #b9bdc2;width:0"></div>
<div class="b" style="left:886px;top:471px;width:1px;height:182px;border-left:1px dotted #b9bdc2;width:0"></div>
<div class="b" style="left:904px;top:273px;width:1px;height:180px;border-left:1px dotted #b9bdc2;width:0"></div>
<div class="b" style="left:904px;top:471px;width:1px;height:182px;border-left:1px dotted #b9bdc2;width:0"></div>
<div class="b" style="left:922px;top:273px;width:1px;height:180px;border-left:1px dotted #b9bdc2;width:0"></div>
<div class="b" style="left:922px;top:471px;width:1px;height:182px;border-left:1px dotted #b9bdc2;width:0"></div>
<div class="b" style="left:358px;top:405px;width:13px;height:41px;background:rgba(255,255,255,0.85)"></div>
<div class="b" style="left:359px;top:406px;width:11px;height:19px;background:#cc0000"></div>
<div class="b" style="left:359px;top:425px;width:11px;height:21px;background:#6aae24"></div>
<div class="b" style="left:376px;top:410px;width:13px;height:36px;background:rgba(255,255,255,0.85)"></div>
<div class="b" style="left:377px;top:411px;width:11px;height:17px;background:#cc0000"></div>
<div class="b" style="left:377px;top:428px;width:11px;height:18px;background:#6aae24"></div>
<div class="b" style="left:394px;top:410px;width:13px;height:36px;background:rgba(255,255,255,0.85)"></div>
<div class="b" style="left:395px;top:411px;width:11px;height:18px;background:#cc0000"></div>
<div class="b" style="left:395px;top:429px;width:11px;height:17px;background:#6aae24"></div>
<div class="b" style="left:412px;top:414px;width:13px;height:32px;background:rgba(255,255,255,0.85)"></div>
<div class="b" style="left:413px;top:415px;width:11px;height:15px;background:#cc0000"></div>
<div class="b" style="left:413px;top:430px;width:11px;height:16px;background:#6aae24"></div>
<div class="b" style="left:430px;top:409px;width:13px;height:37px;background:rgba(255,255,255,0.85)"></div>
<div class="b" style="left:431px;top:410px;width:11px;height:20px;background:#cc0000"></div>
<div class="b" style="left:431px;top:430px;width:11px;height:16px;background:#6aae24"></div>
<div class="b" style="left:448px;top:412px;width:13px;height:34px;background:rgba(255,255,255,0.85)"></div>
<div class="b" style="left:449px;top:413px;width:11px;height:16px;background:#cc0000"></div>
<div class="b" style="left:449px;top:429px;width:11px;height:17px;background:#6aae24"></div>
<div class="b" style="left:466px;top:407px;width:13px;height:39px;background:rgba(255,255,255,0.85)"></div>
<div class="b" style="left:467px;top:408px;width:11px;height:14px;background:#cc0000"></div>
<div class="b" style="left:467px;top:422px;width:11px;height:24px;background:#6aae24"></div>
<div class="b" style="left:484px;top:407px;width:13px;height:39px;background:rgba(255,255,255,0.85)"></div>
<div class="b" style="left:485px;top:408px;width:11px;height:16px;background:#cc0000"></div>
<div class="b" style="left:485px;top:424px;width:11px;height:22px;background:#6aae24"></div>
<div class="b" style="left:502px;top:408px;width:13px;height:38px;background:rgba(255,255,255,0.85)"></div>
<div class="b" style="left:503px;top:409px;width:11px;height:17px;background:#cc0000"></div>
<div class="b" style="left:503px;top:426px;width:11px;height:20px;background:#6aae24"></div>
<div class="b" style="left:520px;top:407px;width:13px;height:39px;background:rgba(255,255,255,0.85)"></div>
<div class="b" style="left:521px;top:408px;width:11px;height:18px;background:#cc0000"></div>
<div class="b" style="left:521px;top:426px;width:11px;height:20px;background:#6aae24"></div>
<div class="b" style="left:538px;top:412px;width:13px;height:34px;background:rgba(255,255,255,0.85)"></div>
<div class="b" style="left:539px;top:413px;width:11px;height:16px;background:#cc0000"></div>
<div class="b" style="left:539px;top:429px;width:11px;height:17px;background:#6aae24"></div>
<div class="b" style="left:556px;top:409px;width:13px;height:37px;background:rgba(255,255,255,0.85)"></div>
<div class="b" style="left:557px;top:410px;width:11px;height:17px;background:#cc0000"></div>
<div class="b" style="left:557px;top:427px;width:11px;height:19px;background:#6aae24"></div>
<div class="b" style="left:574px;top:406px;width:13px;height:40px;background:rgba(255,255,255,0.85)"></div>
<div class="b" style="left:575px;top:407px;width:11px;height:17px;background:#cc0000"></div>
<div class="b" style="left:575px;top:424px;width:11px;height:22px;background:#6aae24"></div>
<div class="b" style="left:592px;top:413px;width:13px;height:33px;background:rgba(255,255,255,0.85)"></div>
<div class="b" style="left:593px;top:414px;width:11px;height:18px;background:#cc0000"></div>
<div class="b" style="left:593px;top:432px;width:11px;height:14px;background:#6aae24"></div>
<div class="b" style="left:610px;top:400px;width:13px;height:46px;background:rgba(255,255,255,0.85)"></div>
<div class="b" style="left:611px;top:401px;width:11px;height:19px;background:#cc0000"></div>
<div class="b" style="left:611px;top:420px;width:11px;height:26px;background:#6aae24"></div>
<div class="b" style="left:628px;top:409px;width:13px;height:37px;background:rgba(255,255,255,0.85)"></div>
<div class="b" style="left:629px;top:410px;width:11px;height:19px;background:#cc0000"></div>
<div class="b" style="left:629px;top:429px;width:11px;height:17px;background:#6aae24"></div>
<div class="b" style="left:646px;top:407px;width:13px;height:39px;background:rgba(255,255,255,0.85)"></div>
<div class="b" style="left:647px;top:408px;width:11px;height:19px;background:#cc0000"></div>
<div class="b" style="left:647px;top:427px;width:11px;height:19px;background:#6aae24"></div>
<div class="b" style="left:664px;top:406px;width:13px;height:40px;background:rgba(255,255,255,0.85)"></div>
<div class="b" style="left:665px;top:407px;width:11px;height:18px;background:#cc0000"></div>
<div class="b" style="left:665px;top:425px;width:11px;height:21px;background:#6aae24"></div>
<div class="b" style="left:682px;top:406px;width:13px;height:40px;background:rgba(255,255,255,0.85)"></div>
<div class="b" style="left:683px;top:407px;width:11px;height:17px;background:#cc0000"></div>
<div class="b" style="left:683px;top:424px;width:11px;height:22px;background:#6aae24"></div>
<div class="b" style="left:700px;top:410px;width:13px;height:36px;background:rgba(255,255,255,0.85)"></div>
<div class="b" style="left:701px;top:411px;width:11px;height:16px;background:#cc0000"></div>
<div class="b" style="left:701px;top:427px;width:11px;height:19px;background:#6aae24"></div>
<div class="b" style="left:718px;top:408px;width:13px;height:38px;background:rgba(255,255,255,0.85)"></div>
<div class="b" style="left:719px;top:409px;width:11px;height:17px;background:#cc0000"></div>
<div class="b" style="left:719px;top:426px;width:11px;height:20px;background:#6aae24"></div>
<div class="b" style="left:736px;top:406px;width:13px;height:40px;background:rgba(255,255,255,0.85)"></div>
<div class="b" style="left:737px;top:407px;width:11px;height:18px;background:#cc0000"></div>
<div class="b" style="left:737px;top:425px;width:11px;height:21px;background:#6aae24"></div>
<div class="b" style="left:754px;top:408px;width:13px;height:38px;background:rgba(255,255,255,0.85)"></div>
<div class="b" style="left:755px;top:409px;width:11px;height:18px;background:#cc0000"></div>
<div class="b" style="left:755px;top:427px;width:11px;height:19px;background:#6aae24"></div>
<div class="b" style="left:772px;top:413px;width:13px;height:33px;background:rgba(255,255,255,0.85)"></div>
<div class="b" style="left:773px;top:414px;width:11px;height:16px;background:#cc0000"></div>
<div class="b" style="left:773px;top:430px;width:11px;height:16px;background:#6aae24"></div>
<div class="b" style="left:790px;top:410px;width:13px;height:36px;background:rgba(255,255,255,0.85)"></div>
<div class="b" style="left:791px;top:411px;width:11px;height:17px;background:#cc0000"></div>
<div class="b" style="left:791px;top:428px;width:11px;height:18px;background:#6aae24"></div>
<div class="b" style="left:808px;top:413px;width:13px;height:33px;background:rgba(255,255,255,0.85)"></div>
<div class="b" style="left:809px;top:414px;width:11px;height:15px;background:#cc0000"></div>
<div class="b" style="left:809px;top:429px;width:11px;height:17px;background:#6aae24"></div>
<div class="b" style="left:826px;top:401px;width:13px;height:45px;background:rgba(255,255,255,0.85)"></div>
<div class="b" style="left:827px;top:402px;width:11px;height:19px;background:#cc0000"></div>
<div class="b" style="left:827px;top:421px;width:11px;height:25px;background:#6aae24"></div>
<div class="b" style="left:844px;top:408px;width:13px;height:38px;background:rgba(255,255,255,0.85)"></div>
<div class="b" style="left:845px;top:409px;width:11px;height:21px;background:#cc0000"></div>
<div class="b" style="left:845px;top:430px;width:11px;height:16px;background:#6aae24"></div>
<div class="b" style="left:862px;top:400px;width:13px;height:46px;background:rgba(255,255,255,0.85)"></div>
<div class="b" style="left:863px;top:401px;width:11px;height:22px;background:#cc0000"></div>
<div class="b" style="left:863px;top:423px;width:11px;height:23px;background:#6aae24"></div>
<div class="b" style="left:880px;top:403px;width:13px;height:43px;background:rgba(255,255,255,0.85)"></div>
<div class="b" style="left:881px;top:404px;width:11px;height:22px;background:#cc0000"></div>
<div class="b" style="left:881px;top:426px;width:11px;height:20px;background:#6aae24"></div>
<div class="b" style="left:898px;top:408px;width:13px;height:38px;background:rgba(255,255,255,0.85)"></div>
<div class="b" style="left:899px;top:409px;width:11px;height:16px;background:#cc0000"></div>
<div class="b" style="left:899px;top:425px;width:11px;height:21px;background:#6aae24"></div>
<div class="b" style="left:359px;top:494px;width:11px;height:21px;background:#a7de38"></div>
<div class="b" style="left:359px;top:515px;width:11px;height:139px;background:#f9d92d"></div>
<div class="b" style="left:377px;top:494px;width:11px;height:20px;background:#a7de38"></div>
<div class="b" style="left:377px;top:514px;width:11px;height:140px;background:#f9d92d"></div>
<div class="b" style="left:395px;top:517px;width:11px;height:18px;background:#a7de38"></div>
<div class="b" style="left:395px;top:535px;width:11px;height:119px;background:#f9d92d"></div>
<div class="b" style="left:413px;top:527px;width:11px;height:17px;background:#a7de38"></div>
<div class="b" style="left:413px;top:544px;width:11px;height:110px;background:#f9d92d"></div>
<div class="b" style="left:431px;top:613px;width:11px;height:17px;background:#a7de38"></div>
<div class="b" style="left:431px;top:630px;width:11px;height:24px;background:#f9d92d"></div>
<div class="b" style="left:449px;top:490px;width:11px;height:17px;background:#a7de38"></div>
<div class="b" style="left:449px;top:507px;width:11px;height:147px;background:#f9d92d"></div>
<div class="b" style="left:467px;top:494px;width:11px;height:24px;background:#a7de38"></div>
<div class="b" style="left:467px;top:518px;width:11px;height:136px;background:#f9d92d"></div>
<div class="b" style="left:485px;top:499px;width:11px;height:22px;background:#a7de38"></div>
<div class="b" style="left:485px;top:521px;width:11px;height:133px;background:#f9d92d"></div>
<div class="b" style="left:503px;top:577px;width:11px;height:21px;background:#a7de38"></div>
<div class="b" style="left:503px;top:598px;width:11px;height:56px;background:#f9d92d"></div>
<div class="b" style="left:521px;top:518px;width:11px;height:20px;background:#a7de38"></div>
<div class="b" style="left:521px;top:538px;width:11px;height:116px;background:#f9d92d"></div>
<div class="b" style="left:539px;top:600px;width:11px;height:18px;background:#a7de38"></div>
<div class="b" style="left:539px;top:618px;width:11px;height:36px;background:#f9d92d"></div>
<div class="b" style="left:557px;top:506px;width:11px;height:20px;background:#a7de38"></div>
<div class="b" style="left:557px;top:526px;width:11px;height:128px;background:#f9d92d"></div>
<div class="b" style="left:575px;top:498px;width:11px;height:23px;background:#a7de38"></div>
<div class="b" style="left:575px;top:521px;width:11px;height:133px;background:#f9d92d"></div>
<div class="b" style="left:593px;top:588px;width:11px;height:15px;background:#a7de38"></div>
<div class="b" style="left:593px;top:603px;width:11px;height:51px;background:#f9d92d"></div>
<div class="b" style="left:611px;top:523px;width:11px;height:27px;background:#a7de38"></div>
<div class="b" style="left:611px;top:550px;width:11px;height:104px;background:#f9d92d"></div>
<div class="b" style="left:629px;top:503px;width:11px;height:19px;background:#a7de38"></div>
<div class="b" style="left:629px;top:522px;width:11px;height:132px;background:#f9d92d"></div>
<div class="b" style="left:647px;top:508px;width:11px;height:20px;background:#a7de38"></div>
<div class="b" style="left:647px;top:528px;width:11px;height:126px;background:#f9d92d"></div>
<div class="b" style="left:665px;top:518px;width:11px;height:22px;background:#a7de38"></div>
<div class="b" style="left:665px;top:540px;width:11px;height:114px;background:#f9d92d"></div>
<div class="b" style="left:683px;top:503px;width:11px;height:22px;background:#a7de38"></div>
<div class="b" style="left:683px;top:525px;width:11px;height:129px;background:#f9d92d"></div>
<div class="b" style="left:701px;top:511px;width:11px;height:21px;background:#a7de38"></div>
<div class="b" style="left:701px;top:532px;width:11px;height:122px;background:#f9d92d"></div>
<div class="b" style="left:719px;top:536px;width:11px;height:21px;background:#a7de38"></div>
<div class="b" style="left:719px;top:557px;width:11px;height:97px;background:#f9d92d"></div>
<div class="b" style="left:737px;top:518px;width:11px;height:22px;background:#a7de38"></div>
<div class="b" style="left:737px;top:540px;width:11px;height:114px;background:#f9d92d"></div>
<div class="b" style="left:755px;top:535px;width:11px;height:20px;background:#a7de38"></div>
<div class="b" style="left:755px;top:555px;width:11px;height:99px;background:#f9d92d"></div>
<div class="b" style="left:773px;top:517px;width:11px;height:17px;background:#a7de38"></div>
<div class="b" style="left:773px;top:534px;width:11px;height:120px;background:#f9d92d"></div>
<div class="b" style="left:791px;top:566px;width:11px;height:19px;background:#a7de38"></div>
<div class="b" style="left:791px;top:585px;width:11px;height:69px;background:#f9d92d"></div>
<div class="b" style="left:809px;top:529px;width:11px;height:19px;background:#a7de38"></div>
<div class="b" style="left:809px;top:548px;width:11px;height:106px;background:#f9d92d"></div>
<div class="b" style="left:827px;top:511px;width:11px;height:27px;background:#a7de38"></div>
<div class="b" style="left:827px;top:538px;width:11px;height:116px;background:#f9d92d"></div>
<div class="b" style="left:845px;top:579px;width:11px;height:16px;background:#a7de38"></div>
<div class="b" style="left:845px;top:595px;width:11px;height:59px;background:#f9d92d"></div>
<div class="b" style="left:863px;top:523px;width:11px;height:24px;background:#a7de38"></div>
<div class="b" style="left:863px;top:547px;width:11px;height:107px;background:#f9d92d"></div>
<div class="b" style="left:881px;top:557px;width:11px;height:21px;background:#a7de38"></div>
<div class="b" style="left:881px;top:578px;width:11px;height:76px;background:#f9d92d"></div>
<div class="b" style="left:899px;top:555px;width:11px;height:22px;background:#a7de38"></div>
<div class="b" style="left:899px;top:577px;width:11px;height:77px;background:#f9d92d"></div>
<div class="t" style="left:364.5px;top:468px;font-size:11px;line-height:11px;color:#000;transform-origin:0 0;transform:rotate(-90deg) translate(0,-4.8px);letter-spacing:-0.4px">1</div>
<div class="t" style="left:382.5px;top:468px;font-size:11px;line-height:11px;color:#000;transform-origin:0 0;transform:rotate(-90deg) translate(0,-4.8px);letter-spacing:-0.4px">2</div>
<div class="t" style="left:400.5px;top:468px;font-size:11px;line-height:11px;color:#000;transform-origin:0 0;transform:rotate(-90deg) translate(0,-4.8px);letter-spacing:-0.4px">3</div>
<div class="t" style="left:418.5px;top:468px;font-size:11px;line-height:11px;color:#000;transform-origin:0 0;transform:rotate(-90deg) translate(0,-4.8px);letter-spacing:-0.4px">4</div>
<div class="t" style="left:436.5px;top:468px;font-size:11px;line-height:11px;color:#000;transform-origin:0 0;transform:rotate(-90deg) translate(0,-4.8px);letter-spacing:-0.4px">5</div>
<div class="t" style="left:454.5px;top:468px;font-size:11px;line-height:11px;color:#000;transform-origin:0 0;transform:rotate(-90deg) translate(0,-4.8px);letter-spacing:-0.4px">6</div>
<div class="t" style="left:472.5px;top:468px;font-size:11px;line-height:11px;color:#000;transform-origin:0 0;transform:rotate(-90deg) translate(0,-4.8px);letter-spacing:-0.4px">7</div>
<div class="t" style="left:490.5px;top:468px;font-size:11px;line-height:11px;color:#000;transform-origin:0 0;transform:rotate(-90deg) translate(0,-4.8px);letter-spacing:-0.4px">8</div>
<div class="t" style="left:508.5px;top:468px;font-size:11px;line-height:11px;color:#000;transform-origin:0 0;transform:rotate(-90deg) translate(0,-4.8px);letter-spacing:-0.4px">9</div>
<div class="t" style="left:526.5px;top:468px;font-size:11px;line-height:11px;color:#000;transform-origin:0 0;transform:rotate(-90deg) translate(0,-4.8px);letter-spacing:-0.4px">10</div>
<div class="t" style="left:544.5px;top:468px;font-size:11px;line-height:11px;color:#000;transform-origin:0 0;transform:rotate(-90deg) translate(0,-4.8px);letter-spacing:-0.4px">11</div>
<div class="t" style="left:562.5px;top:468px;font-size:11px;line-height:11px;color:#000;transform-origin:0 0;transform:rotate(-90deg) translate(0,-4.8px);letter-spacing:-0.4px">12</div>
<div class="t" style="left:580.5px;top:468px;font-size:11px;line-height:11px;color:#000;transform-origin:0 0;transform:rotate(-90deg) translate(0,-4.8px);letter-spacing:-0.4px">13</div>
<div class="t" style="left:598.5px;top:468px;font-size:11px;line-height:11px;color:#000;transform-origin:0 0;transform:rotate(-90deg) translate(0,-4.8px);letter-spacing:-0.4px">14</div>
<div class="t" style="left:616.5px;top:468px;font-size:11px;line-height:11px;color:#000;transform-origin:0 0;transform:rotate(-90deg) translate(0,-4.8px);letter-spacing:-0.4px">15</div>
<div class="t" style="left:634.5px;top:468px;font-size:11px;line-height:11px;color:#000;transform-origin:0 0;transform:rotate(-90deg) translate(0,-4.8px);letter-spacing:-0.4px">16</div>
<div class="t" style="left:652.5px;top:468px;font-size:11px;line-height:11px;color:#000;transform-origin:0 0;transform:rotate(-90deg) translate(0,-4.8px);letter-spacing:-0.4px">17</div>
<div class="t" style="left:670.5px;top:468px;font-size:11px;line-height:11px;color:#000;transform-origin:0 0;transform:rotate(-90deg) translate(0,-4.8px);letter-spacing:-0.4px">18</div>
<div class="t" style="left:688.5px;top:468px;font-size:11px;line-height:11px;color:#000;transform-origin:0 0;transform:rotate(-90deg) translate(0,-4.8px);letter-spacing:-0.4px">19</div>
<div class="t" style="left:706.5px;top:468px;font-size:11px;line-height:11px;color:#000;transform-origin:0 0;transform:rotate(-90deg) translate(0,-4.8px);letter-spacing:-0.4px">20</div>
<div class="t" style="left:724.5px;top:468px;font-size:11px;line-height:11px;color:#000;transform-origin:0 0;transform:rotate(-90deg) translate(0,-4.8px);letter-spacing:-0.4px">21</div>
<div class="t" style="left:742.5px;top:468px;font-size:11px;line-height:11px;color:#000;transform-origin:0 0;transform:rotate(-90deg) translate(0,-4.8px);letter-spacing:-0.4px">22</div>
<div class="t" style="left:760.5px;top:468px;font-size:11px;line-height:11px;color:#000;transform-origin:0 0;transform:rotate(-90deg) translate(0,-4.8px);letter-spacing:-0.4px">23</div>
<div class="t" style="left:778.5px;top:468px;font-size:11px;line-height:11px;color:#000;transform-origin:0 0;transform:rotate(-90deg) translate(0,-4.8px);letter-spacing:-0.4px">24</div>
<div class="t" style="left:796.5px;top:468px;font-size:11px;line-height:11px;color:#000;transform-origin:0 0;transform:rotate(-90deg) translate(0,-4.8px);letter-spacing:-0.4px">25</div>
<div class="t" style="left:814.5px;top:468px;font-size:11px;line-height:11px;color:#000;transform-origin:0 0;transform:rotate(-90deg) translate(0,-4.8px);letter-spacing:-0.4px">26</div>
<div class="t" style="left:832.5px;top:468px;font-size:11px;line-height:11px;color:#000;transform-origin:0 0;transform:rotate(-90deg) translate(0,-4.8px);letter-spacing:-0.4px">27</div>
<div class="t" style="left:850.5px;top:468px;font-size:11px;line-height:11px;color:#000;transform-origin:0 0;transform:rotate(-90deg) translate(0,-4.8px);letter-spacing:-0.4px">28</div>
<div class="t" style="left:868.5px;top:468px;font-size:11px;line-height:11px;color:#000;transform-origin:0 0;transform:rotate(-90deg) translate(0,-4.8px);letter-spacing:-0.4px">29</div>
<div class="t" style="left:886.5px;top:468px;font-size:11px;line-height:11px;color:#000;transform-origin:0 0;transform:rotate(-90deg) translate(0,-4.8px);letter-spacing:-0.4px">30</div>
<div class="t" style="left:904.5px;top:468px;font-size:11px;line-height:11px;color:#000;transform-origin:0 0;transform:rotate(-90deg) translate(0,-4.8px);letter-spacing:-0.4px">31</div>
<div class="t" style="left:305px;top:499px;font-size:11px;line-height:11px;color:#000;transform-origin:0 0;transform:rotate(-90deg) translate(0,0px);letter-spacing:-0.1px">Energie [kWh]</div>
<div class="b" style="left:307px;top:691px;width:627px;height:33px;border:1px solid #c5cad0;width:625px;height:31px"></div>
<svg class="b" style="left:312px;top:696px" width="14" height="13"><polygon points="0,0 14,0 0,13" fill="#cc0000"/><polygon points="14,0 14,13 0,13" fill="#6aae24"/></svg>
<div class="t" style="left:332px;top:695.69px;font-size:11px;line-height:11px;font-weight:normal;color:#111;letter-spacing:-0.2px;">Monatsverbrauch</div>
<div class="t" style="left:332px;top:711.69px;font-size:11px;line-height:11px;font-weight:bold;color:#6a6a6a;letter-spacing:0.55px;">192,63 kWh</div>
<div class="b" style="left:424px;top:696px;width:14px;height:14px;background:#cc0000"></div>
<div class="t" style="left:444px;top:695.69px;font-size:11px;line-height:11px;font-weight:normal;color:#111;letter-spacing:-0.2px;">Netzbezug</div>
<div class="t" style="left:444px;top:711.69px;font-size:11px;line-height:11px;font-weight:bold;color:#6a6a6a;letter-spacing:0.55px;">88,57 kWh</div>
<div class="b" style="left:516px;top:696px;width:14px;height:14px;background:#6aae24"></div>
<div class="t" style="left:536.4px;top:695.69px;font-size:11px;line-height:11px;font-weight:normal;color:#111;letter-spacing:-0.2px;">Eigenversorgung</div>
<div class="t" style="left:536.4px;top:711.69px;font-size:11px;line-height:11px;font-weight:bold;color:#6a6a6a;letter-spacing:0.55px;">104,06 kWh</div>
<svg class="b" style="left:626px;top:696px" width="14" height="13"><polygon points="0,0 14,0 0,13" fill="#a7de38"/><polygon points="14,0 14,13 0,13" fill="#f9d92d"/></svg>
<div class="t" style="left:646.4px;top:695.69px;font-size:11px;line-height:11px;font-weight:normal;color:#111;letter-spacing:-0.2px;">Monatsertrag</div>
<div class="t" style="left:646.4px;top:711.69px;font-size:11px;line-height:11px;font-weight:bold;color:#6a6a6a;letter-spacing:0.55px;">661,25 kWh</div>
<div class="b" style="left:725px;top:696px;width:14px;height:14px;background:#a7de38"></div>
<div class="t" style="left:745.4px;top:695.69px;font-size:11px;line-height:11px;font-weight:normal;color:#111;letter-spacing:-0.2px;">Eigenverbrauch</div>
<div class="t" style="left:745.4px;top:711.69px;font-size:11px;line-height:11px;font-weight:bold;color:#6a6a6a;letter-spacing:0.55px;">104,06 kWh</div>
<div class="b" style="left:830px;top:696px;width:14px;height:14px;background:#f9d92d"></div>
<div class="t" style="left:849.3px;top:695.69px;font-size:11px;line-height:11px;font-weight:normal;color:#111;letter-spacing:-0.2px;">Netzeinspeisung</div>
<div class="t" style="left:849.3px;top:711.69px;font-size:11px;line-height:11px;font-weight:bold;color:#6a6a6a;letter-spacing:0.55px;">557,19 kWh</div>
<div class="b" style="left:546px;top:745px;width:19px;height:15px;border:1px solid #9a9a9a;border-radius:4px;background:linear-gradient(#fff,#e4e4e4);width:17px;height:13px;box-shadow:1px 1px 1px #ccc"></div>
<svg class="b" style="left:553px;top:748.5px" width="5" height="8"><polygon points="4.5,0 4.5,7.5 0,3.75" fill="#0a58b0"/></svg>
<div class="b" style="left:570px;top:743px;width:104px;height:18px;border:1px solid #8c8c8c;background:#fff;width:102px;height:16px"></div>
<div class="t" style="left:572.5px;top:746.69px;font-size:11px;line-height:11px;font-weight:normal;color:#000;letter-spacing:-0.2px;">Juli 2018</div>
<div class="b" style="left:654px;top:744px;width:18px;height:15px;background:#efefef;border-left:1px solid #a0a0a0;border-top:1px solid #a0a0a0;border-right:2px solid #747474;border-bottom:2px solid #6e6e6e;width:17px;height:14px;box-shadow:inset 1px 1px 0 #fff"></div>
<svg class="b" style="left:659.5px;top:749.5px" width="10" height="8"><polyline points="1,1 4.5,4.8 8,1" fill="none" stroke="#000" stroke-width="1.6"/></svg>
<div class="b" style="left:678px;top:745px;width:19px;height:15px;border:1px solid #c8c8c8;border-radius:4px;background:#fff;width:17px;height:13px"></div>
<svg class="b" style="left:686px;top:749px" width="5" height="8"><polygon points="0,0 0,7 4.2,3.5" fill="#74a8dc"/></svg>
<svg class="b" style="left:935px;top:742px" width="18" height="18" viewBox="0 0 18 18">
<path d="M13.05 7.76 L14.93 8.02 L14.93 9.98 L13.05 10.24 L12.45 11.70 L13.59 13.21 L12.21 14.59 L10.70 13.45 L9.24 14.05 L8.98 15.93 L7.02 15.93 L6.76 14.05 L5.30 13.45 L3.79 14.59 L2.41 13.21 L3.55 11.70 L2.95 10.24 L1.07 9.98 L1.07 8.02 L2.95 7.76 L3.55 6.30 L2.41 4.79 L3.79 3.41 L5.30 4.55 L6.76 3.95 L7.02 2.07 L8.98 2.07 L9.24 3.95 L10.70 4.55 L12.21 3.41 L13.59 4.79 L12.45 6.30 Z M8 6.5 A2.5 2.5 0 1 0 8.01 6.5 Z" fill="#e8e8e8" stroke="#999" stroke-width="0.8" fill-rule="evenodd"/>
<polygon points="9,6 17,6 13,1" fill="#0a5cc0"/>
</svg>
<div class="b" style="left:292px;top:775px;width:660px;height:177px;border:1px solid #bdbdbd;border-bottom:1px solid #b0b0b0;border-radius:10px 10px 0 0;background:#fff;width:658px;height:176px;box-shadow:0 3px 0 #e4e4e4"></div>
<div class="b" style="left:293px;top:776px;width:658px;height:28px;background:linear-gradient(#ffffff,#ececec 45%,#dadada);border-radius:9px 9px 0 0;border-bottom:1px solid #c2c2c2;height:28px"></div>
<svg class="b" style="left:302px;top:788px" width="8" height="5"><polygon points="0,0 7,0 3.5,4.5" fill="#777"/></svg>
<div class="t" style="left:312.5px;top:784.69px;font-size:11px;line-height:11px;font-weight:bold;color:#666;letter-spacing:0.2px;">Bilanz</div>
<svg class="b" style="left:314px;top:824px" width="14" height="13"><polygon points="0,0 14,0 0,13" fill="#cc0000"/><polygon points="14,0 14,13 0,13" fill="#6aae24"/></svg>
<div class="t" style="left:335.4px;top:826.69px;font-size:11px;line-height:11px;font-weight:normal;color:#111;letter-spacing:-0.2px;">Monatsverbrauch</div>
<div class="t" style="right:1321px;top:826.69px;font-size:11px;line-height:11px;font-weight:bold;color:#666;letter-spacing:0.55px;">192,63 kWh</div>
<div class="b" style="left:311px;top:844px;width:291px;height:1px;background:#c8c8c8"></div>
<div class="b" style="left:314px;top:850px;width:14px;height:13px;background:#cc0000"></div>
<div class="t" style="left:335.4px;top:852.69px;font-size:11px;line-height:11px;font-weight:normal;color:#111;letter-spacing:-0.2px;">Netzbezug</div>
<div class="t" style="right:1321px;top:852.69px;font-size:11px;line-height:11px;font-weight:bold;color:#666;letter-spacing:0.55px;">88,57 kWh</div>
<div class="b" style="left:311px;top:870px;width:291px;height:1px;background:#c8c8c8"></div>
<div class="b" style="left:314px;top:876px;width:14px;height:13px;background:#6aae24"></div>
<div class="t" style="left:335.4px;top:878.69px;font-size:11px;line-height:11px;font-weight:normal;color:#111;letter-spacing:-0.2px;">Eigenversorgung</div>
<div class="t" style="right:1321px;top:878.69px;font-size:11px;line-height:11px;font-weight:bold;color:#666;letter-spacing:0.55px;">104,06 kWh</div>
<div class="b" style="left:311px;top:902px;width:291px;height:2px;background:#bdbdbd"></div>
<div class="t" style="left:335.4px;top:916.69px;font-size:11px;line-height:11px;font-weight:normal;color:#111;letter-spacing:-0.2px;">Autarkiequote</div>
<div class="t" style="right:1321px;top:916.69px;font-size:11px;line-height:11px;font-weight:bold;color:#666;letter-spacing:1.6px;word-spacing:-1.2px;margin-right:-1.3px">54 %</div>
<svg class="b" style="left:645px;top:824px" width="14" height="13"><polygon points="0,0 14,0 0,13" fill="#a7de38"/><polygon points="14,0 14,13 0,13" fill="#f9d92d"/></svg>
<div class="t" style="left:666.2px;top:826.69px;font-size:11px;line-height:11px;font-weight:normal;color:#111;letter-spacing:-0.2px;">Monatsertrag</div>
<div class="t" style="right:990px;top:826.69px;font-size:11px;line-height:11px;font-weight:bold;color:#666;letter-spacing:0.55px;">661,25 kWh</div>
<div class="b" style="left:642px;top:844px;width:291px;height:1px;background:#c8c8c8"></div>
<div class="b" style="left:645px;top:850px;width:14px;height:13px;background:#a7de38"></div>
<div class="t" style="left:666.2px;top:852.69px;font-size:11px;line-height:11px;font-weight:normal;color:#111;letter-spacing:-0.2px;">Eigenverbrauch</div>
<div class="t" style="right:990px;top:852.69px;font-size:11px;line-height:11px;font-weight:bold;color:#666;letter-spacing:0.55px;">104,06 kWh</div>
<div class="b" style="left:642px;top:870px;width:291px;height:1px;background:#c8c8c8"></div>
<div class="b" style="left:645px;top:876px;width:14px;height:13px;background:#f9d92d"></div>
<div class="t" style="left:666.2px;top:878.69px;font-size:11px;line-height:11px;font-weight:normal;color:#111;letter-spacing:-0.2px;">Netzeinspeisung</div>
<div class="t" style="right:990px;top:878.69px;font-size:11px;line-height:11px;font-weight:bold;color:#666;letter-spacing:0.55px;">557,19 kWh</div>
<div class="b" style="left:642px;top:902px;width:291px;height:2px;background:#bdbdbd"></div>
<div class="t" style="left:666.2px;top:916.69px;font-size:11px;line-height:11px;font-weight:normal;color:#111;letter-spacing:-0.2px;">Eigenverbrauchsquote</div>
<div class="t" style="right:990px;top:916.69px;font-size:11px;line-height:11px;font-weight:bold;color:#666;letter-spacing:1.6px;word-spacing:-1.2px;margin-right:-1.3px">16 %</div>
<div class="b" style="left:0px;top:1016px;width:1920px;height:64px;background:linear-gradient(#ececec,#f6f6f6 25%,#fcfcfc 45%,#fdfdfd)"></div>
<div class="b" style="left:0px;top:1079px;width:1920px;height:1px;background:#e8e8e8"></div>
<div class="t" style="left:10px;top:1025.69px;font-size:11px;line-height:11px;font-weight:normal;color:#505050;letter-spacing:-0.1px;">© 2018 SMA Solar Technology AG</div>
<div class="t" style="left:188.5px;top:1025.69px;font-size:11px;line-height:11px;font-weight:normal;color:#505050;letter-spacing:-0.1px;">|</div>
<div class="t" style="left:201px;top:1025.69px;font-size:11px;line-height:11px;font-weight:normal;color:#505050;letter-spacing:-0.1px;">Startseite</div>
<div class="t" style="left:258.5px;top:1025.69px;font-size:11px;line-height:11px;font-weight:normal;color:#505050;letter-spacing:-0.1px;">|</div>
<div class="t" style="left:272px;top:1025.69px;font-size:11px;line-height:11px;font-weight:normal;color:#505050;letter-spacing:-0.1px;">Information</div>
<div class="t" style="left:340.5px;top:1025.69px;font-size:11px;line-height:11px;font-weight:normal;color:#505050;letter-spacing:-0.1px;">|</div>
<div class="t" style="left:353.75px;top:1025.69px;font-size:11px;line-height:11px;font-weight:normal;color:#505050;letter-spacing:-0.1px;">Bedienungsanleitungen</div>
<div class="t" style="left:478px;top:1025.69px;font-size:11px;line-height:11px;font-weight:normal;color:#505050;letter-spacing:-0.1px;">|</div>
<div class="t" style="left:491px;top:1025.69px;font-size:11px;line-height:11px;font-weight:normal;color:#505050;letter-spacing:-0.1px;">FAQ</div>
<div class="t" style="left:522.5px;top:1025.69px;font-size:11px;line-height:11px;font-weight:normal;color:#505050;letter-spacing:-0.1px;">|</div>
<div class="t" style="left:536px;top:1025.69px;font-size:11px;line-height:11px;font-weight:normal;color:#505050;letter-spacing:-0.1px;">Nutzungsbedingungen</div>
<div class="t" style="left:655px;top:1025.69px;font-size:11px;line-height:11px;font-weight:normal;color:#505050;letter-spacing:-0.1px;">|</div>
<div class="t" style="left:669.5px;top:1025.69px;font-size:11px;line-height:11px;font-weight:normal;color:#505050;letter-spacing:-0.1px;">Datenschutzerklärung</div>
<div class="t" style="left:786px;top:1025.69px;font-size:11px;line-height:11px;font-weight:normal;color:#505050;letter-spacing:-0.1px;">|</div>
<div class="t" style="left:799px;top:1025.69px;font-size:11px;line-height:11px;font-weight:normal;color:#505050;letter-spacing:-0.1px;">Impressum</div>
</body></html>
